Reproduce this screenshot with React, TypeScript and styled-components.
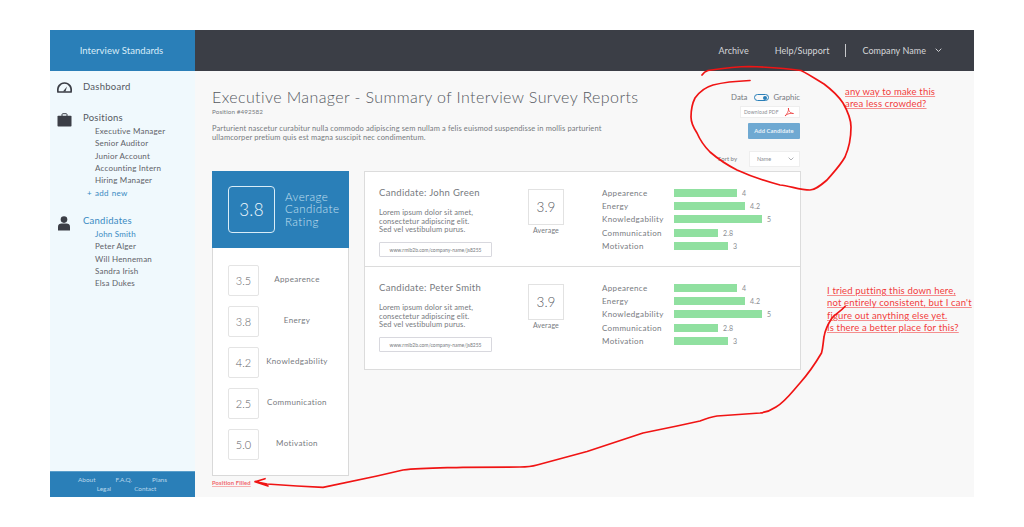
import React from "react";
import styled, {createGlobalStyle} from "styled-components";

const GlobalStyle = createGlobalStyle`
  html, body {
    margin: 0;
    background: #fff;
  }
  body {
    font-family: "Lato", "Open Sans", sans-serif;
    color: #55585f;
  }
  * {
    box-sizing: border-box;
  }
`;

const Frame = styled.div`
  position: relative;
  width: 924px;
  height: 467px;
  margin: 30px 50px;
  display: grid;
  grid-template-columns: 145px 1fr;
  grid-template-rows: 41px 1fr;
  background: #f8f8f8;
  opacity: 0.999;
`;

const Brand = styled.div`
  background: #2a7fb8;
  color: #d9edf8;
  display: flex;
  align-items: center;
  justify-content: center;
  font-size: 9.5px;
  letter-spacing: 0.05px;
  padding-right: 2px;
`;

const TopBar = styled.div`
  background: #3b3e46;
  color: #d5d6d9;
  display: flex;
  align-items: center;
  justify-content: flex-end;
  padding-right: 32px;
  font-size: 9px;
  letter-spacing: 0.05px;
`;

const TopLink = styled.span<{$gap?: number}>`
  margin-right: ${p => p.$gap ?? 0}px;
`;

const TopDivider = styled.span`
  width: 1px;
  height: 13px;
  background: #c8c9cc;
  margin-right: 16px;
`;

const Sidebar = styled.aside`
  background: #f0f9fd;
  display: flex;
  flex-direction: column;
`;

const NavList = styled.div`
  flex: 1;
  padding: 10px 0 0 7px;
`;

const NavSection = styled.div<{$gap: number}>`
  display: grid;
  grid-template-columns: 26px 1fr;
  margin-bottom: ${p => p.$gap}px;
`;

const NavIcon = styled.div`
  display: flex;
  justify-content: flex-start;
  padding-top: 1px;
`;

const NavTitle = styled.div<{$active?: boolean}>`
  font-size: 9.5px;
  letter-spacing: 0.25px;
  line-height: 12px;
  color: ${p => (p.$active ? "#3a8ac2" : "#55585f")};
  margin-bottom: 1px;
`;

const NavItem = styled.div<{$active?: boolean}>`
  font-size: 8px;
  letter-spacing: 0.2px;
  line-height: 12.35px;
  padding-left: 12px;
  color: ${p => (p.$active ? "#3a8ac2" : "#5f6268")};
`;

const AddNew = styled(NavItem)`
  padding-left: 4px;
  color: #3a8ac2;
  word-spacing: 1px;
`;

const SideFooter = styled.div`
  background: #2a7fb8;
  border-top: 1px solid #5a9ecb;
  height: 26px;
  padding-top: 3px;
  color: #b9d8ec;
  font-size: 6.4px;
  line-height: 9px;
`;

const FooterRow = styled.div<{$gap: number; $shift: number}>`
  display: flex;
  justify-content: center;
  gap: ${p => p.$gap}px;
  transform: translateX(${p => p.$shift}px);
`;

const Main = styled.main`
  padding: 0 173px 0 17px;
  display: flex;
  flex-direction: column;
`;

const Head = styled.div`
  height: 100px;
  display: flex;
  justify-content: space-between;
`;

const HeadText = styled.div`
  padding-top: 16px;
`;

const Title = styled.h1`
  margin: 0;
  font-size: 16px;
  font-weight: 300;
  letter-spacing: 0.4px;
  line-height: 20px;
  color: #55585f;
  white-space: nowrap;
`;

const PositionNo = styled.div`
  font-size: 6.3px;
  line-height: 9px;
  letter-spacing: 0.1px;
  color: #777a80;
`;

const Intro = styled.p`
  margin: 9px 0 0;
  width: 400px;
  font-size: 7.5px;
  line-height: 8.8px;
  letter-spacing: 0.12px;
  color: #777a80;
`;

const Tools = styled.div`
  width: 110px;
  padding: 21px 1px 0 0;
  display: flex;
  flex-direction: column;
  align-items: flex-end;
  flex-shrink: 0;
`;

const ToggleRow = styled.div`
  display: flex;
  align-items: center;
  font-size: 7.8px;
  line-height: 11px;
  color: #777a80;
`;

const Switch = styled.span`
  width: 15px;
  height: 7px;
  margin: 0 4px 0 7px;
  border: 1px solid #2a7fb8;
  border-radius: 4px;
  display: flex;
  justify-content: flex-end;
  align-items: center;
  padding: 0 1px;
  &::after {
    content: "";
    width: 4px;
    height: 4px;
    border-radius: 50%;
    background: #2a7fb8;
  }
`;

const PdfButton = styled.div`
  width: 60px;
  height: 12px;
  margin-top: 3px;
  background: #fff;
  border: 1px solid #eeeeee;
  display: flex;
  align-items: center;
  padding-left: 3px;
  font-size: 5px;
  letter-spacing: 0.1px;
  color: #8a8d92;
  gap: 5px;
`;

const AddButton = styled.div`
  width: 52px;
  height: 15.5px;
  margin-top: 5px;
  background: #6fa9d2;
  border-radius: 1px;
  color: #eaf3f9;
  font-size: 5.8px;
  font-weight: 700;
  display: flex;
  align-items: center;
  justify-content: center;
  letter-spacing: 0.1px;
`;

const SortRow = styled.div`
  margin-top: 12.5px;
  display: flex;
  align-items: center;
  font-size: 6px;
  color: #777a80;
  gap: 12px;
`;

const SortSelect = styled.div`
  width: 51px;
  height: 15.5px;
  background: #fff;
  border: 1px solid #eeeeee;
  display: flex;
  align-items: center;
  justify-content: space-between;
  padding: 0 5px 0 7px;
  font-size: 5.5px;
  color: #8a8d92;
`;

const Columns = styled.div`
  display: flex;
  align-items: flex-start;
  gap: 15px;
`;

const LeftColumn = styled.div`
  width: 137px;
  flex-shrink: 0;
`;

const Summary = styled.div`
  height: 305px;
  background: #fff;
  border: 1px solid #d9d9d9;
  border-top: 0;
`;

const SummaryTop = styled.div`
  height: 77px;
  margin: 0 -1px;
  background: #2a7fb8;
  display: flex;
  align-items: center;
  padding-left: 16px;
  gap: 10px;
`;

const BigScore = styled.div`
  width: 47px;
  height: 47px;
  border: 1px solid #d9edf8;
  border-radius: 4px;
  color: #eef7fc;
  font-size: 17px;
  font-weight: 300;
  letter-spacing: 0.3px;
  display: flex;
  align-items: center;
  justify-content: center;
`;

const BigLabel = styled.div`
  color: #c6e0f1;
  font-size: 11.5px;
  font-weight: 300;
  line-height: 12.5px;
  letter-spacing: 0.45px;
`;

const ScoreList = styled.div`
  padding: 17px 0 0 15px;
  display: flex;
  flex-direction: column;
  gap: 10px;
`;

const ScoreRow = styled.div`
  display: flex;
  align-items: flex-start;
`;

const ScoreBox = styled.div`
  width: 31px;
  height: 31px;
  border: 1px solid #e4e4e4;
  border-radius: 2px;
  font-size: 11px;
  font-weight: 300;
  color: #5f6268;
  display: flex;
  align-items: center;
  justify-content: center;
  flex-shrink: 0;
`;

const ScoreLabel = styled.div`
  width: 76px;
  text-align: center;
  font-size: 8px;
  letter-spacing: 0.35px;
  line-height: 10px;
  padding-top: 9px;
  color: #777a80;
  white-space: nowrap;
`;

const FilledLink = styled.div`
  margin-top: 3px;
  font-size: 5.8px;
  font-weight: 700;
  letter-spacing: 0.15px;
  color: #f0646a;
  text-decoration: underline;
  text-decoration-color: #f7b0b0;
`;

const Candidates = styled.div`
  width: 437px;
  background: #fff;
  border: 1px solid #dcdcdc;
`;

const CandidateRow = styled.div<{$height: number; $last?: boolean}>`
  height: ${p => p.$height}px;
  padding: 14px 0 0 14px;
  display: grid;
  grid-template-columns: 149px 36px 1fr;
  border-bottom: ${p => (p.$last ? "0" : "1px solid #dcdcdc")};
`;

const CandidateName = styled.div`
  font-size: 9.5px;
  letter-spacing: 0.3px;
  line-height: 13px;
  color: #777a80;
`;

const Blurb = styled.div`
  margin-top: 10px;
  font-size: 7.5px;
  line-height: 8.7px;
  letter-spacing: 0.12px;
  color: #777a80;
`;

const LinkBox = styled.div`
  width: 113px;
  height: 15px;
  margin-top: 7px;
  border: 1px solid #d8d8de;
  border-radius: 1px;
  font-size: 5px;
  display: flex;
  align-items: center;
  justify-content: center;
  color: #777a80;
  white-space: nowrap;
`;

const AverageCol = styled.div`
  padding-top: 3px;
  text-align: center;
`;

const AverageBox = styled.div`
  width: 36px;
  height: 36px;
  border: 1px solid #e2e2e2;
  font-size: 13.5px;
  font-weight: 300;
  color: #55585f;
  display: flex;
  align-items: center;
  justify-content: center;
`;

const AverageLabel = styled.div`
  font-size: 7px;
  line-height: 9px;
  margin-top: 1px;
  letter-spacing: 0.15px;
  color: #777a80;
`;

const Metrics = styled.div`
  margin-left: 38px;
`;

const MetricRow = styled.div`
  display: grid;
  grid-template-columns: 72px auto;
  align-items: center;
  justify-content: start;
  height: 13.35px;
`;

const MetricName = styled.span`
  font-size: 8px;
  letter-spacing: 0.35px;
  color: #777a80;
  white-space: nowrap;
`;

const BarWrap = styled.span`
  display: flex;
  align-items: center;
  gap: 5px;
`;

const Bar = styled.span<{$w: number}>`
  width: ${p => p.$w}px;
  height: 8px;
  background: #90e0a0;
`;

const BarValue = styled.span`
  font-size: 7px;
  letter-spacing: 0.2px;
  color: #8a8d92;
`;

const Note = styled.div<{$x: number; $y: number}>`
  position: absolute;
  left: ${p => p.$x}px;
  top: ${p => p.$y}px;
  color: #f23c3c;
  font-size: 9.5px;
  line-height: 12.35px;
  letter-spacing: 0.17px;
  white-space: pre;
  text-decoration: underline;
  text-decoration-color: #f58f8f;
`;

const Scribble = styled.svg`
  position: absolute;
  left: 0;
  top: 0;
  width: 1024px;
  height: 527px;
  pointer-events: none;
`;

const GaugeIcon = () => (
  <svg width="15" height="11" viewBox="0 0 15 11">
    <path d="M1 10 C0 5 3 1 7.500 1 C12 1 15 5 14 10 Z" fill="none" stroke="#3b3e46" strokeWidth="1.700" />
    <path d="M6 9.500 L10 4.500 L8.500 9.500 Z" fill="#3b3e46" />
  </svg>
);

const BriefcaseIcon = () => (
  <svg width="15" height="14" viewBox="0 0 15 14">
    <path d="M5 3 V1.500 C5 1 5.400 .7 6 .7 H9 C9.600 .7 10 1 10 1.500 V3" fill="none" stroke="#3b3e46" strokeWidth="1" />
    <rect x="0.500" y="2.700" width="14" height="10.800" rx="0.800" fill="#3b3e46" />
  </svg>
);

const UserIcon = () => (
  <svg width="14" height="15" viewBox="0 0 14 15">
    <circle cx="7" cy="3.600" r="3.300" fill="#3b3e46" />
    <path d="M1 14.500 V10.500 C1 8.800 2.500 7.600 4.500 7.600 H9.500 C11.500 7.600 13 8.800 13 10.500 V14.500 Z" fill="#3b3e46" />
  </svg>
);

const Chevron = ({size, color}: {size: number; color: string}) => (
  <svg width={size} height={size * 0.6} viewBox="0 0 10 6">
    <path d="M1 1 L5 5 L9 1" fill="none" stroke={color} strokeWidth="1.400" />
  </svg>
);

const PdfIcon = () => (
  <svg width="10" height="10" viewBox="0 0 10 10">
    <path d="M1 9 C3 7 5 4 4.500 1 C4 3 6 6.500 9.500 6.500 C7 6 3 6.500 1 9 Z" fill="none" stroke="#ee3b3b" strokeWidth="0.800" />
  </svg>
);

const navPositions = ["Executive Manager", "Senior Auditor", "Junior Account", "Accounting Intern", "Hiring Manager"];
const navCandidates = ["John Smith", "Peter Alger", "Will Henneman", "Sandra Irish", "Elsa Dukes"];

const summaryScores = [
  {score: "3.5", label: "Appearence"},
  {score: "3.8", label: "Energy"},
  {score: "4.2", label: "Knowledgability"},
  {score: "2.5", label: "Communication"},
  {score: "5.0", label: "Motivation"},
];

const metrics = [
  {name: "Appearence", value: "4", width: 63},
  {name: "Energy", value: "4.2", width: 71},
  {name: "Knowledgability", value: "5", width: 88},
  {name: "Communication", value: "2.8", width: 44},
  {name: "Motivation", value: "3", width: 54},
];

const candidates = [
  {name: "Candidate: John Green", height: 95},
  {name: "Candidate: Peter Smith", height: 102, last: true},
];

export default function App() {
  return (
    <>
      <GlobalStyle />
      <Frame>
        <Brand>Interview Standards</Brand>
        <TopBar>
          <TopLink $gap={26}>Archive</TopLink>
          <TopLink $gap={16}>Help/Support</TopLink>
          <TopDivider />
          <TopLink $gap={9}>Company Name</TopLink>
          <Chevron size={7} color="#d5d6d9" />
        </TopBar>
        <Sidebar>
          <NavList>
            <NavSection $gap={18}>
              <NavIcon><GaugeIcon /></NavIcon>
              <NavTitle>Dashboard</NavTitle>
            </NavSection>
            <NavSection $gap={16}>
              <NavIcon><BriefcaseIcon /></NavIcon>
              <div>
                <NavTitle>Positions</NavTitle>
                {navPositions.map(p => <NavItem key={p}>{p}</NavItem>)}
                <AddNew>+ add new</AddNew>
              </div>
            </NavSection>
            <NavSection $gap={0}>
              <NavIcon><UserIcon /></NavIcon>
              <div>
                <NavTitle $active>Candidates</NavTitle>
                {navCandidates.map((c, i) => <NavItem key={c} $active={i === 0}>{c}</NavItem>)}
              </div>
            </NavSection>
          </NavList>
          <SideFooter>
            <FooterRow $gap={20} $shift={0}>
              <span>About</span><span>F.A.Q.</span><span>Plans</span>
            </FooterRow>
            <FooterRow $gap={23} $shift={4}>
              <span>Legal</span><span>Contact</span>
            </FooterRow>
          </SideFooter>
        </Sidebar>
        <Main>
          <Head>
            <HeadText>
              <Title>Executive Manager - Summary of Interview Survey Reports</Title>
              <PositionNo>Position #492582</PositionNo>
              <Intro>
                Parturient nascetur curabitur nulla commodo adipiscing sem nullam a felis euismod suspendisse in mollis parturient
                ullamcorper pretium quis est magna suscipit nec condimentum.
              </Intro>
            </HeadText>
            <Tools>
              <ToggleRow>Data<Switch />Graphic</ToggleRow>
              <PdfButton>Download PDF <PdfIcon /></PdfButton>
              <AddButton>Add Candidate</AddButton>
              <SortRow>
                Sort by
                <SortSelect>Name <Chevron size={6} color="#a0a3a8" /></SortSelect>
              </SortRow>
            </Tools>
          </Head>
          <Columns>
            <LeftColumn>
              <Summary>
                <SummaryTop>
                  <BigScore>3.8</BigScore>
                  <BigLabel>Average<br />Candidate<br />Rating</BigLabel>
                </SummaryTop>
                <ScoreList>
                  {summaryScores.map(s => (
                    <ScoreRow key={s.label}>
                      <ScoreBox>{s.score}</ScoreBox>
                      <ScoreLabel>{s.label}</ScoreLabel>
                    </ScoreRow>
                  ))}
                </ScoreList>
              </Summary>
              <FilledLink>Position Filled</FilledLink>
            </LeftColumn>
            <Candidates>
              {candidates.map(c => (
                <CandidateRow key={c.name} $height={c.height} $last={c.last}>
                  <div>
                    <CandidateName>{c.name}</CandidateName>
                    <Blurb>Lorem ipsum dolor sit amet,<br />consectetur adipiscing elit.<br />Sed vel vestibulum purus.</Blurb>
                    <LinkBox>www.rmib2b.com/company-name/js8255</LinkBox>
                  </div>
                  <AverageCol>
                    <AverageBox>3.9</AverageBox>
                    <AverageLabel>Average</AverageLabel>
                  </AverageCol>
                  <Metrics>
                    {metrics.map(m => (
                      <MetricRow key={m.name}>
                        <MetricName>{m.name}</MetricName>
                        <BarWrap>
                          <Bar $w={m.width} />
                          <BarValue>{m.value}</BarValue>
                        </BarWrap>
                      </MetricRow>
                    ))}
                  </Metrics>
                </CandidateRow>
              ))}
            </Candidates>
          </Columns>
        </Main>
        <Note $x={795} $y={56}>{"any way to make this\narea less crowded?"}</Note>
        <Note $x={777} $y={255}>{"I tried putting this down here,\nnot entirely consistent, but I can't\nfigure out anything else yet.\nIs there a better place for this?"}</Note>
      </Frame>
      <Scribble viewBox="0 0 1024 527">
        <g fill="none" stroke="#f01414" strokeWidth="1.700" strokeLinecap="round" strokeLinejoin="round">
          <path d="M702 75 C704 72 706 71 708 70.500 C725 68 736 66.500 749 66.500 C765 67 785 68 801 70.500 C810 75 817 80 824 84 C832 90 839 97 843 103 C847 110 851 118 851 127 C851 138 849 148 845 157 C840 166 832 174 827 180 C820 186 815 190 810 190 C800 190 790 186 780 185 C765 181 750 176 737 170 C727 165 717 158 710 152 C704 146 700 140 697 133 C693 127 691 122 691 117 C691 110 692 104 695 98 C700 91 706 87 713 85 C725 82 738 81 750 80.500" />
          <path d="M845 306.500 C840 312 835 314 832 318 C828 324 825 330 824 337 C823 343 823 348 821.500 353 C815 364 808 374 800 383 C792 392 785 402 776 407 C770 411 765 412.500 760 413 C745 414 730 415 717 416 C710 417 705 419 700 421 L677 426 L643 433 L587 451.500 L537 465 C530 467 525 467 520 467 L463 467.300 C440 468 420 468 403 470 L377 476 L323 487.300 L297 486 L267 484 L255 481.700 L265 478.700 M255 481.700 L268 486" />
        </g>
      </Scribble>
    </>
  );
}
